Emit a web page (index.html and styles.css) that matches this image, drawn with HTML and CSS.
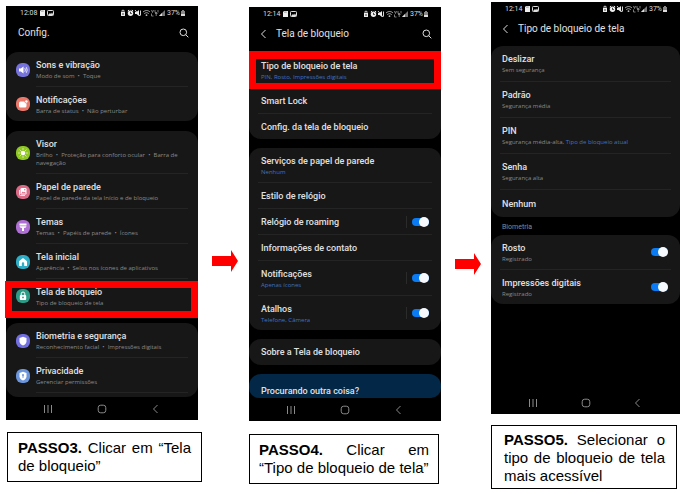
FILE: index.html
```
<!DOCTYPE html>
<html lang="pt-BR">
<head>
<meta charset="utf-8">
<title>Configurar o tipo de bloqueio de tela</title>
<link rel="stylesheet" href="styles.css">
</head>
<body>
<svg class="defs" aria-hidden="true">
  <symbol id="status-left" viewBox="0 0 16 8">
    <path fill="#eee" d="M2 1h4v6H1V2z"/><path stroke="#555" stroke-width=".6" d="M2.8 1.5v1.3M4 1.5v1.3"/>
    <rect x="8.5" y="1.5" width="6" height="5" rx=".8" fill="none" stroke="#ddd"/><path fill="#ddd" d="M9 6l2-2 1 1 1-1.500 1.500 2.500z"/>
  </symbol>
  <symbol id="status-right" viewBox="0 0 46 8">
    <path fill="#eee" d="M1 3h4v4H1z"/><path fill="none" stroke="#eee" stroke-width=".8" d="M2 3V1.300h2V3"/><path stroke="#111" stroke-width=".8" d="M2 5h2"/>
    <circle cx="10.500" cy="4.300" r="2.700" fill="#eee"/><path stroke="#eee" d="M7.800 2l1.300-1M13.200 2l-1.300-1"/><path fill="none" stroke="#111" stroke-width=".8" d="M10.500 2.800v1.700h1.300"/>
    <path fill="#eee" d="M15 3h1.500L19 1v6l-2.500-2H15z"/><path stroke="#eee" stroke-width=".9" d="M15 1l5 6M20.500 1.500v5"/>
    <path fill="none" stroke="#bbb" stroke-width=".9" d="M23 3c2.500-2 5-2 7 0M24.300 4.600c1.500-1.200 3-1.200 4.400 0"/><circle cx="26.500" cy="6.200" r=".9" fill="#bbb"/>
    <path fill="none" stroke="#999" stroke-width=".8" d="M31.500 1l1 2.500 1-2.500M35 1v2.500h2M31.500 4.500v2.500h2M35 4.500h2.500M36.200 4.500V7M38 1v2.500"/>
    <path fill="#777" d="M45 1v6h-6z"/><path fill="#ddd" d="M42 4v3h-3z"/>
  </symbol>
  <symbol id="battery" viewBox="0 0 6 8"><path fill="#888" d="M2 1h2v1h1v5H1V2h1z"/><path fill="#ddd" d="M1 5h4v2H1z"/></symbol>
  <symbol id="search" viewBox="0 0 10 10"><circle cx="4.300" cy="4.300" r="3.300"/><path d="M6.700 6.700L9.300 9.300"/></symbol>
  <symbol id="chevron" viewBox="0 0 10 10"><path d="M6.500 1L2.500 5l4 4"/></symbol>
  <symbol id="recents" viewBox="0 0 10 10"><path d="M1.500 1v8M5 1v8M8.500 1v8"/></symbol>
  <symbol id="home" viewBox="0 0 10 10"><rect x="1.200" y="1.200" width="7.600" height="7.600" rx="2.500"/></symbol>
  <symbol id="arrow" viewBox="0 0 26 22"><path fill="red" d="M0 6h19V0l7 11-7 11v-6H0z"/></symbol>
</svg>

<main class="steps">
  <section class="step first">
    <div class="phone">
      <div class="status"><span>12:08</span><svg class="status-left"><use href="#status-left"/></svg><svg class="status-right"><use href="#status-right"/></svg><span>37%</span><svg class="battery"><use href="#battery"/></svg></div>
      <header class="bar"><h2>Config.</h2><button class="tool" aria-label="Pesquisar"><svg><use href="#search"/></svg></button></header>
      <div class="cards">
        <ul class="card">
          <li class="row"><svg class="icon" viewBox="0 0 14 14"><rect width="14" height="14" rx="6" fill="#7773dc"/><path fill="#fff" d="M3 5.500h1.800L7.500 3.500v7L4.800 8.500H3z"/><path fill="none" stroke="#fff" stroke-width=".8" d="M8.800 5.200q1.200 1.800 0 3.600M10.300 4.200q1.800 2.800 0 5.600"/></svg><a class="body" href="#"><span class="name">Sons e vibração</span><span class="note">Modo de som &nbsp;•&nbsp; Toque</span></a></li>
          <li class="row"><svg class="icon" viewBox="0 0 14 14"><rect width="14" height="14" rx="6" fill="#ea796c"/><rect x="3" y="4.500" width="7.500" height="6" rx="1.500" fill="#fff"/><circle cx="10.400" cy="4.500" r="1.900" fill="#ea796c"/><circle cx="10.400" cy="4.500" r="1.200" fill="#fff"/></svg><a class="body" href="#"><span class="name">Notificações</span><span class="note">Barra de status &nbsp;•&nbsp; Não perturbar</span></a></li>
        </ul>
        <ul class="card">
          <li class="row"><svg class="icon" viewBox="0 0 14 14"><rect width="14" height="14" rx="6" fill="#8fc821"/><circle cx="7" cy="7" r="2.300" fill="#fff"/><path stroke="#fff" stroke-linecap="round" d="M7 2.800v.4M7 10.800v.4M2.800 7h.4M10.800 7h.4M4 4l.3.3M9.700 9.700l.3.3M4 10l.3-.3M9.700 4.300l.3-.3"/></svg><a class="body" href="#"><span class="name">Visor</span><span class="note">Brilho &nbsp;•&nbsp; Proteção para conforto ocular &nbsp;•&nbsp; Barra de navegação</span></a></li>
          <li class="row"><svg class="icon" viewBox="0 0 14 14"><rect width="14" height="14" rx="6" fill="#dc6b88"/><rect x="4.500" y="3" width="6" height="6.500" rx="1.200" fill="#fff"/><path fill="none" stroke="#fff" stroke-width=".8" d="M3.500 5v4.500q0 1 1 1H9"/><path fill="#dc6b88" d="M5.200 8.500l1.600-2 1.100 1 1-.8 1 1.800z"/><circle cx="8.800" cy="4.800" r=".7" fill="#dc6b88"/></svg><a class="body" href="#"><span class="name">Papel de parede</span><span class="note">Papel de parede da tela Início e de bloqueio</span></a></li>
          <li class="row"><svg class="icon" viewBox="0 0 14 14"><rect width="14" height="14" rx="6" fill="#ae70d3"/><path fill="#fff" d="M3.500 3.500h7v2h-7zM3.500 6.200h7q0 1.800-2.500 1.800v3H6V8Q3.500 8 3.500 6.200z"/></svg><a class="body" href="#"><span class="name">Temas</span><span class="note">Temas &nbsp;•&nbsp; Papéis de parede &nbsp;•&nbsp; Ícones</span></a></li>
          <li class="row"><svg class="icon" viewBox="0 0 14 14"><rect width="14" height="14" rx="6" fill="#2eafc7"/><path fill="#fff" d="M7 3l4 3.300V11H8.200V8.500q0-1.200-1.200-1.200T5.800 8.500V11H3V6.300z"/></svg><a class="body" href="#"><span class="name">Tela inicial</span><span class="note">Aparência &nbsp;•&nbsp; Selos nos ícones de aplicativos</span></a></li>
          <li class="row marked marked-lock"><svg class="icon" viewBox="0 0 14 14"><rect width="14" height="14" rx="6" fill="#2c9c87"/><rect x="3.800" y="6" width="6.400" height="5" rx="1" fill="#fff"/><path fill="none" stroke="#fff" d="M5.200 6V4.800a1.800 1.800 0 0 1 3.600 0V6"/><circle cx="7" cy="8.400" r=".9" fill="#2c9c87"/></svg><a class="body" href="#"><span class="name">Tela de bloqueio</span><span class="note">Tipo de bloqueio de tela</span></a></li>
        </ul>
        <ul class="card cut">
          <li class="row"><svg class="icon" viewBox="0 0 14 14"><rect width="14" height="14" rx="6" fill="#726fe0"/><path fill="#fff" d="M7 2.800l3.500 1.200v3.200Q10.500 10 7 11.400 3.500 10 3.500 7.200V4z"/></svg><a class="body" href="#"><span class="name">Biometria e segurança</span><span class="note">Reconhecimento facial &nbsp;•&nbsp; Impressões digitais</span></a></li>
          <li class="row"><svg class="icon" viewBox="0 0 14 14"><rect width="14" height="14" rx="6" fill="#6c96dc"/><path fill="#fff" d="M7 2.800l3.500 1.200v3.200Q10.500 10 7 11.400 3.500 10 3.500 7.200V4z"/><circle cx="7" cy="6" r="1" fill="#6c96dc"/><path stroke="#6c96dc" d="M7 6v2.800"/></svg><a class="body" href="#"><span class="name">Privacidade</span><span class="note">Gerenciar permissões</span></a></li>
        </ul>
      </div>
      <nav class="keys"><button aria-label="Recentes"><svg><use href="#recents"/></svg></button><button aria-label="Início"><svg><use href="#home"/></svg></button><button aria-label="Voltar"><svg><use href="#chevron"/></svg></button></nav>
    </div>
    <p class="caption"><strong>PASSO3.</strong> Clicar em “Tela de bloqueio”</p>
  </section>

  <svg class="arrow" role="img" aria-label="Próximo passo"><use href="#arrow"/></svg>

  <section class="step second">
    <div class="phone">
      <div class="status"><span>12:14</span><svg class="status-left"><use href="#status-left"/></svg><svg class="status-right"><use href="#status-right"/></svg><span>37%</span><svg class="battery"><use href="#battery"/></svg></div>
      <header class="bar"><button class="tool" aria-label="Voltar"><svg><use href="#chevron"/></svg></button><h2>Tela de bloqueio</h2><button class="tool" aria-label="Pesquisar"><svg><use href="#search"/></svg></button></header>
      <div class="cards">
        <ul class="card">
          <li class="row marked marked-type"><a class="body" href="#"><span class="name">Tipo de bloqueio de tela</span><span class="note link">PIN, Rosto, Impressões digitais</span></a></li>
          <li class="row"><a class="body" href="#"><span class="name">Smart Lock</span></a></li>
          <li class="row"><a class="body" href="#"><span class="name">Config. da tela de bloqueio</span></a></li>
        </ul>
        <ul class="card">
          <li class="row"><a class="body" href="#"><span class="name">Serviços de papel de parede</span><span class="note link">Nenhum</span></a></li>
          <li class="row"><a class="body" href="#"><span class="name">Estilo de relógio</span></a></li>
          <li class="row"><label class="body" for="roaming"><span class="name">Relógio de roaming</span></label><span class="switch split"><input type="checkbox" id="roaming" checked></span></li>
          <li class="row"><a class="body" href="#"><span class="name">Informações de contato</span></a></li>
          <li class="row"><label class="body" for="notify"><span class="name">Notificações</span><span class="note link">Apenas ícones</span></label><span class="switch split"><input type="checkbox" id="notify" checked></span></li>
          <li class="row"><label class="body" for="shortcuts"><span class="name">Atalhos</span><span class="note link">Telefone, Câmera</span></label><span class="switch split"><input type="checkbox" id="shortcuts" checked></span></li>
        </ul>
        <ul class="card"><li class="row"><a class="body" href="#"><span class="name">Sobre a Tela de bloqueio</span></a></li></ul>
        <div class="card help"><h3 class="name">Procurando outra coisa?</h3></div>
      </div>
      <nav class="keys"><button aria-label="Recentes"><svg><use href="#recents"/></svg></button><button aria-label="Início"><svg><use href="#home"/></svg></button><button aria-label="Voltar"><svg><use href="#chevron"/></svg></button></nav>
    </div>
    <p class="caption"><strong>PASSO4.</strong> Clicar em “Tipo&nbsp;de bloqueio de tela”</p>
  </section>

  <svg class="arrow low" role="img" aria-label="Próximo passo"><use href="#arrow"/></svg>

  <section class="step third">
    <div class="phone">
      <div class="status"><span>12:14</span><svg class="status-left"><use href="#status-left"/></svg><svg class="status-right"><use href="#status-right"/></svg><span>37%</span><svg class="battery"><use href="#battery"/></svg></div>
      <header class="bar"><button class="tool" aria-label="Voltar"><svg><use href="#chevron"/></svg></button><h2>Tipo de bloqueio de tela</h2></header>
      <div class="cards">
        <ul class="card roomy">
          <li class="row"><a class="body" href="#"><span class="name">Deslizar</span><span class="note">Sem segurança</span></a></li>
          <li class="row"><a class="body" href="#"><span class="name">Padrão</span><span class="note">Segurança média</span></a></li>
          <li class="row"><a class="body" href="#"><span class="name">PIN</span><span class="note">Segurança média-alta, <span class="link">Tipo de bloqueio atual</span></span></a></li>
          <li class="row"><a class="body" href="#"><span class="name">Senha</span><span class="note">Segurança alta</span></a></li>
          <li class="row"><a class="body" href="#"><span class="name">Nenhum</span></a></li>
        </ul>
        <h3 class="group">Biometria</h3>
        <ul class="card">
          <li class="row"><label class="body" for="face"><span class="name">Rosto</span><span class="note">Registrado</span></label><span class="switch"><input type="checkbox" id="face" checked></span></li>
          <li class="row"><label class="body" for="finger"><span class="name">Impressões digitais</span><span class="note">Registrado</span></label><span class="switch"><input type="checkbox" id="finger" checked></span></li>
        </ul>
      </div>
      <nav class="keys"><button aria-label="Recentes"><svg><use href="#recents"/></svg></button><button aria-label="Início"><svg><use href="#home"/></svg></button><button aria-label="Voltar"><svg><use href="#chevron"/></svg></button></nav>
    </div>
    <p class="caption"><strong>PASSO5.</strong> Selecionar o tipo de bloqueio de tela mais acessível</p>
  </section>
</main>
</body>
</html>
```
FILE: styles.css
```
* { box-sizing: border-box; }
body { margin: 0; background: #fff; font-family: "Liberation Sans", Arial, sans-serif; }
h2, h3, p, ul { margin: 0; padding: 0; }
ul { list-style: none; }
a { color: inherit; text-decoration: none; }
button { padding: 0; border: 0; background: none; color: inherit; }
svg { display: block; flex: none; }
.defs { position: absolute; width: 0; height: 0; }

.steps {
  display: grid;
  grid-template-columns: minmax(0, 192fr) minmax(0, 51fr) minmax(0, 192fr) minmax(0, 50fr) minmax(0, 189fr);
  align-items: start;
  padding: 0 7px 0 6px;
}
.step { padding-top: 6px; }
.step.second { padding-top: 7px; }
.step.third { padding-top: 2px; }
.arrow { width: 26px; height: 22px; margin: 250px 0 0 14px; }
.arrow.low { margin-top: 253px; }

.phone {
  display: flex;
  flex-direction: column;
  min-height: 412px;
  background: #000;
  color: #e0e0e0;
  font-family: Roboto, sans-serif;
}
.status { display: flex; align-items: center; height: 14px; padding: 0 12px 0 14px; font-size: 7px; line-height: 8px; color: #ddd; }
.status-left { width: 16px; height: 8px; margin: 0 auto 0 2px; }
.status-right { width: 46px; height: 8px; margin-right: 1px; }
.battery { width: 6px; height: 8px; }

.bar { display: flex; align-items: center; gap: 7px; height: 26px; padding: 0 9px 0 12px; }
.bar h2 { flex: 1; font-size: 10px; font-weight: 400; line-height: 14px; }
.second .bar, .third .bar { padding-left: 10px; }
.tool svg, .keys svg { width: 10px; height: 10px; fill: none; stroke: currentColor; }

.cards { display: flex; flex-direction: column; gap: 9px; padding-top: 6px; }
.first .cards { gap: 10px; }
.third .cards { padding-top: 4px; }
.card { border-radius: 12px; background: #171717; }
.card.cut { padding-bottom: 4px; }
.row { display: flex; gap: 6px; padding: 0 10px; position: relative; }
.icon { width: 14px; height: 14px; align-self: center; }
.body { flex: 1; min-width: 0; padding-top: 6px; padding-bottom: 5px; }
.body:has(.note) { padding-bottom: 6px; }
.body, .switch { border-bottom: 1px solid #242424; }
.card:not(.cut) .row:last-child > * { border-bottom: 0; }
.row:only-child .body { padding-bottom: 6px; }
.roomy .body:has(.note) { padding-bottom: 7px; }
.roomy .row:last-child .body { padding-top: 7px; padding-bottom: 6px; }
.name { display: block; font-size: 9px; font-weight: 500; line-height: 14px; }
.note { display: block; font-family: "Open Sans", sans-serif; font-size: 6px; line-height: 8px; color: #8a8a8a; }
.link { color: #3f73c2; }

.second .row, .third .row { gap: 0; padding: 0 9px; }
.second .body { padding-left: 3px; }
.third .body { padding-left: 2px; }
.help { padding: 10px 12px 0; border-radius: 12px 12px 10px 10px; background: #032746; }
.group { padding: 0 11px; margin: -3px 0 -5px; font-size: 7px; font-weight: 400; line-height: 8px; color: #8a8a8a; }

.switch { display: flex; align-items: center; padding-right: 3px; }
.switch.split::before { content: ""; width: 1px; height: 12px; margin-right: 5px; background: #2b2b2b; }
.switch input {
  appearance: none;
  display: flex;
  align-items: center;
  width: 17px;
  height: 8px;
  margin: 0;
  border-radius: 4px;
  background: #555;
}
.switch input::after { content: ""; width: 10px; height: 10px; border-radius: 50%; background: #f6faff; }
.switch input:checked { justify-content: flex-end; background: #0a7bf2; }

.marked::after { content: ""; position: absolute; z-index: 1; border: 7px solid red; pointer-events: none; }
.marked-lock::after { inset: 2px 0 -5px -1px; }
.marked-type::after { inset: -2px 0 -1px 0; border-width: 8px 7px 6px; }

.keys { display: flex; justify-content: space-between; align-items: center; height: 23px; margin-top: auto; padding: 0 37px; color: #8a8a8a; }

.caption {
  margin: 12px -4px 0 1px;
  padding: 6px 10px 6px;
  border: 1px solid #000;
  font-size: 15px;
  line-height: 18px;
  text-align: justify;
  color: #000;
}
.second .caption { margin: 13px 2px 0 0; padding: 6px 9px; }
.third .caption { margin: 11px 3px 0 0; padding: 5px 11px 3px 12px; }
```
